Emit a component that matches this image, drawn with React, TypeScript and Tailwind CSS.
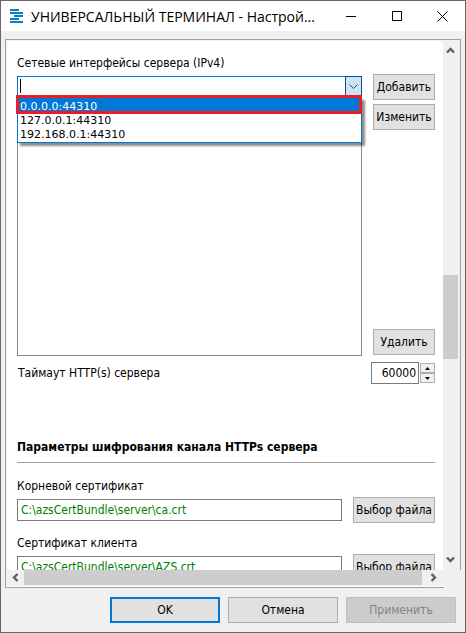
import React, { useState } from "react";

const addresses = ["0.0.0.0:44310", "127.0.0.1:44310", "192.168.0.1:44310"];

type ButtonProps = {
	children: React.ReactNode;
	className?: string;
	disabled?: boolean;
};

const Button: React.FC<ButtonProps> = ({
	children,
	className = "border border-[#adadad] bg-[#e1e1e1] text-black",
	disabled,
}) => {
	return (
		<button
			type="button"
			disabled={disabled}
			className={`flex h-[26px] w-full items-center justify-center whitespace-nowrap ${className}`}
		>
			{children}
		</button>
	);
};

type ArrowProps = { className?: string };

const ScrollArrow: React.FC<ArrowProps> = ({ className }) => {
	return (
		<svg
			width="9"
			height="9"
			viewBox="0 0 9 9"
			fill="none"
			stroke="#606060"
			strokeWidth="2.4"
			className={className}
		>
			<path d="M1 6.5 4.5 3 8 6.5" />
		</svg>
	);
};

type CertificateProps = {
	id: string;
	label: string;
	path: string;
};

const CertificateField: React.FC<CertificateProps> = ({ id, label, path }) => {
	return (
		<div className="h-[57px]">
			<label htmlFor={id} className="block h-5 leading-5">
				{label}
			</label>
			<div className="mt-px flex items-center gap-[11px]">
				<input
					id={id}
					type="text"
					defaultValue={path}
					className="h-[22px] min-w-0 flex-1 border border-[#7a7a7a] bg-white px-[3px] text-[#008000] outline-none"
				/>
				<div className="w-[82px]">
					<Button>Выбор файла</Button>
				</div>
			</div>
		</div>
	);
};

const App: React.FC = () => {
	const [address, setAddress] = useState("");
	const [selected, setSelected] = useState(0);

	return (
		<div className="flex h-screen flex-col overflow-hidden border border-[#666] bg-[#f0f0f0] font-['DejaVu_Sans_Condensed','Noto_Sans',sans-serif] text-[12px] text-black">
			<header className="flex h-[30px] shrink-0 items-center bg-white pl-[9px]">
				<svg width="14" height="14" viewBox="0 0 14 14" fill="#0a7fc2">
					<path d="M0 0h9v2H0zM0 3h13v2H0zM4 6h9v2H4zM0 9h9v2H0zM0 12h13v2H0z" />
				</svg>
				<h1 className="ml-[7px] min-w-0 flex-1 whitespace-nowrap font-['Open_Sans',sans-serif] text-[14px] font-normal">
					УНИВЕРСАЛЬНЫЙ ТЕРМИНАЛ - Настрой...
				</h1>
				<div className="flex h-full shrink-0">
					<button type="button" aria-label="Свернуть" className="flex w-[45px] items-center justify-center">
						<svg width="11" height="11" stroke="#000">
							<path d="M0 5.5h10" />
						</svg>
					</button>
					<button type="button" aria-label="Развернуть" className="flex w-[45px] items-center justify-center">
						<svg width="10" height="10" fill="none" stroke="#000">
							<path d="M.5.5h9v9h-9z" />
						</svg>
					</button>
					<button type="button" aria-label="Закрыть" className="flex w-[46px] items-center justify-center">
						<svg width="11" height="11" stroke="#000">
							<path d="m.5.5 10 10m0-10-10 10" />
						</svg>
					</button>
				</div>
			</header>

			<main className="mx-1 mt-2 flex min-h-0 flex-1 flex-col">
				<div className="flex min-h-0 flex-1 border-x border-t border-[#a0a0a0]">
					<div className="min-w-0 flex-1 overflow-hidden border-l border-t border-[#f0f0f0] bg-white pl-[10px] pr-2">
						<label htmlFor="address" className="mt-3 block h-5 leading-5">
							Сетевые интерфейсы сервера (IPv4)
						</label>
						<div className="flex gap-[11px]">
							<div className="relative mt-[3px] flex h-[280px] min-w-0 flex-1 flex-col border border-[#828790]">
								<div className="-mx-px -mt-px flex h-[22px] items-stretch border border-[#0078d7] bg-white">
									{!address && <span className="ml-[2px] mt-[2px] h-[14px] w-px bg-black" />}
									<input
										id="address"
										type="text"
										value={address}
										onChange={(e) => setAddress(e.target.value)}
										className="min-w-0 flex-1 bg-white px-[2px] outline-none"
									/>
									<button
										type="button"
										aria-label="Открыть список"
										className="-my-px -mr-px flex w-[17px] items-center justify-center border border-[#005499] bg-[#cce4f7]"
									>
										<svg width="9" height="6" fill="none" stroke="#444">
											<path d="M.5.5l4 4 4-4" />
										</svg>
									</button>
								</div>
								<ul
									role="listbox"
									className="absolute -left-px -right-px top-5 border border-[#0078d7] bg-white font-['DejaVu_Sans',sans-serif] text-[11px] shadow-[3px_3px_2px_rgba(0,0,0,0.45)]"
								>
									{addresses.map((item, index) => (
										<li
											key={item}
											role="option"
											aria-selected={index === selected}
											onMouseEnter={() => setSelected(index)}
											onClick={() => setAddress(item)}
											className={`px-[2px] leading-[14px] first:pt-[2px] ${
												index === selected ? "bg-[#0078d7] text-white" : ""
											}`}
										>
											{item}
										</li>
									))}
								</ul>
								<div className="pointer-events-none absolute -left-[2px] -right-px top-[18px] h-[19px] border-[3px] border-[#ed1c24]" />
							</div>
							<div className="flex w-[62px] flex-col gap-1 py-px">
								<Button>Добавить</Button>
								<Button>Изменить</Button>
								<div className="mt-auto">
									<Button>Удалить</Button>
								</div>
							</div>
						</div>

						<div className="mt-[6px] flex items-center">
							<label htmlFor="timeout" className="flex-1 pl-px">
								Таймаут HTTP(s) сервера
							</label>
							<input
								id="timeout"
								type="text"
								defaultValue="60000"
								className="h-[22px] w-[48px] border border-[#7a7a7a] bg-white pr-[2px] text-right outline-none"
							/>
							<div className="ml-px flex h-5 w-[15px] flex-col">
								<button
									type="button"
									aria-label="Увеличить"
									className="flex flex-1 items-center justify-center border border-[#adadad] bg-[#f0f0f0]"
								>
									<svg width="5" height="3">
										<path d="M0 3 2.5 0 5 3z" />
									</svg>
								</button>
								<button
									type="button"
									aria-label="Уменьшить"
									className="flex flex-1 items-center justify-center border border-[#adadad] bg-[#f0f0f0]"
								>
									<svg width="5" height="3">
										<path d="M0 0 2.5 3 5 0z" />
									</svg>
								</button>
							</div>
						</div>

						<h2 className="mt-[52px] h-[27px] border-b border-[#a0a0a0] font-bold leading-[22px]">
							Параметры шифрования канала HTTPs сервера
						</h2>

						<div className="mt-[13px]">
							<CertificateField
								id="root-cert"
								label="Корневой сертификат"
								path="C:\azsCertBundle\server\ca.crt"
							/>
							<CertificateField
								id="client-cert"
								label="Сертификат клиента"
								path="C:\azsCertBundle\server\AZS.crt"
							/>
						</div>
					</div>
					<div className="mr-[2px] flex w-[15px] shrink-0 flex-col items-center bg-[#f0f0f0] py-[6px]">
						<ScrollArrow />
						<div className="mt-5 flex w-full flex-1 flex-col">
							<div className="flex-[198]" />
							<div className="h-[84px] bg-[#cdcdcd]" />
							<div className="flex-[178]" />
						</div>
						<ScrollArrow className="mt-4 rotate-180" />
					</div>
				</div>
				<div className="mr-[17px] flex h-[18px] shrink-0 flex-col border-b border-l border-[#a0a0a0] bg-white">
					<div className="flex h-[16px] bg-[#f0f0f0]">
						<div className="flex h-[15px] w-[18px] items-center justify-center">
							<ScrollArrow className="-rotate-90" />
						</div>
						<div className="h-[15px] flex-1 bg-[#cdcdcd]" />
						<div className="flex h-[15px] w-[22px] items-center justify-center">
							<ScrollArrow className="rotate-90" />
						</div>
					</div>
				</div>
			</main>

			<footer className="flex shrink-0 justify-end gap-2 px-[9px] py-[9px]">
				<div className="w-[110px]">
					<Button className="border-2 border-[#0078d7] bg-[#e1e1e1] text-black">OK</Button>
				</div>
				<div className="w-[110px]">
					<Button>Отмена</Button>
				</div>
				<div className="w-[110px]">
					<Button disabled className="border border-[#bfbfbf] bg-[#cccccc] text-[#838383]">
						Применить
					</Button>
				</div>
			</footer>
		</div>
	);
};

export default App;
